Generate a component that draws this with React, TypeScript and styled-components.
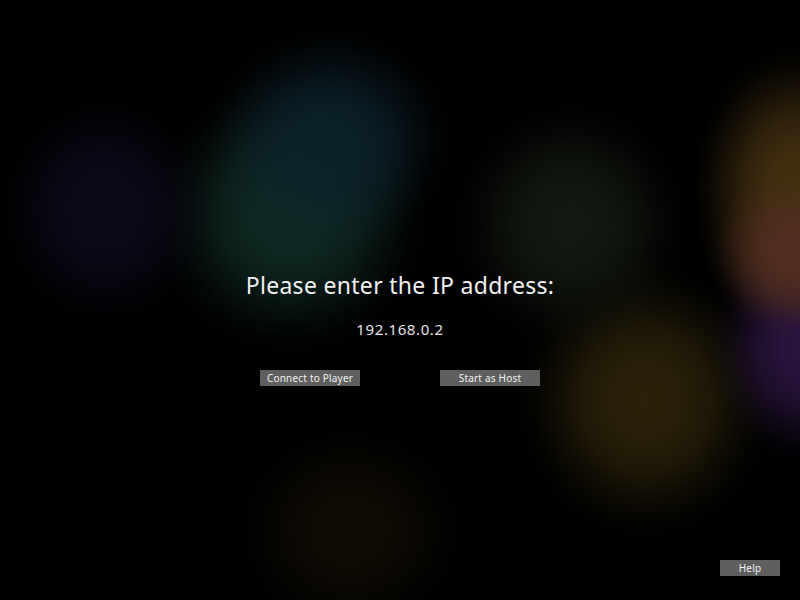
import React from "react";
import styled, { createGlobalStyle } from "styled-components";

const GlobalStyle = createGlobalStyle`
  html, body {
    margin: 0;
    padding: 0;
    background: #000;
  }
  * { box-sizing: border-box; }
`;

type Glow = { rx: number; ry: number; x: number; y: number; rgb: string; a: number };

// Soft coloured light patches behind the menu
const glows: Glow[] = [
  { rx: 110, ry: 120, x: 105, y: 210, rgb: "12, 9, 26", a: 1 },
  { rx: 125, ry: 115, x: 330, y: 140, rgb: "12, 34, 44", a: 0.9 },
  { rx: 140, ry: 140, x: 290, y: 215, rgb: "16, 42, 36", a: 1 },
  { rx: 120, ry: 125, x: 570, y: 225, rgb: "19, 25, 16", a: 1 },
  { rx: 90, ry: 80, x: 795, y: 255, rgb: "84, 46, 34", a: 0.9 },
  { rx: 105, ry: 145, x: 795, y: 190, rgb: "66, 47, 16", a: 1 },
  { rx: 95, ry: 120, x: 805, y: 345, rgb: "42, 20, 62", a: 1 },
  { rx: 130, ry: 140, x: 645, y: 400, rgb: "42, 33, 9", a: 1 },
  { rx: 120, ry: 110, x: 350, y: 530, rgb: "15, 11, 4", a: 1 },
];

const glow = ({ rx, ry, x, y, rgb, a }: Glow) =>
  `radial-gradient(ellipse ${rx}px ${ry}px at ${x}px ${y}px, ` +
  `rgba(${rgb}, ${a}) 0%, rgba(${rgb}, ${a * 0.95}) 25%, rgba(${rgb}, ${a * 0.7}) 50%, ` +
  `rgba(${rgb}, ${a * 0.35}) 70%, rgba(${rgb}, ${a * 0.1}) 87%, rgba(${rgb}, 0) 100%)`;

const Screen = styled.div`
  width: 800px;
  height: 600px;
  overflow: hidden;
  display: grid;
  grid-template-rows: 1fr auto;
  font-family: "Noto Sans", "Open Sans", sans-serif;
  color: #f0f0f0;
  background: ${glows.map(glow).join(", ")}, #000;
`;

const Center = styled.main`
  display: flex;
  flex-direction: column;
  align-items: center;
  padding-top: 266px;
`;

const Title = styled.h1`
  margin: 0;
  font-size: 23px;
  line-height: 38px;
  font-weight: 400;
  letter-spacing: 0.3px;
`;

const Address = styled.div`
  margin-top: 16px;
  font-size: 15px;
  line-height: 19px;
  letter-spacing: 0.6px;
  color: #e4e4e4;
`;

const ButtonRow = styled.div`
  display: flex;
  gap: 80px;
  margin-top: 31px;
`;

const Button = styled.button<{ $width: number }>`
  width: ${(p) => p.$width}px;
  height: 16px;
  padding: 0;
  border: none;
  background: #5f5f5f;
  color: #f0f0f0;
  font-family: "Noto Sans", "Open Sans", sans-serif;
  font-size: 10px;
  line-height: 16px;
  letter-spacing: 0.2px;
  text-align: center;
  cursor: pointer;
`;

const Footer = styled.footer`
  display: flex;
  justify-content: flex-end;
  padding: 0 20px 24px 0;
`;

export default function App() {
  return (
    <>
      <GlobalStyle />
      <Screen>
        <Center>
          <Title>Please enter the IP address:</Title>
          <Address>192.168.0.2</Address>
          <ButtonRow>
            <Button $width={100}>Connect to Player</Button>
            <Button $width={100}>Start as Host</Button>
          </ButtonRow>
        </Center>
        <Footer>
          <Button $width={60}>Help</Button>
        </Footer>
      </Screen>
    </>
  );
}
